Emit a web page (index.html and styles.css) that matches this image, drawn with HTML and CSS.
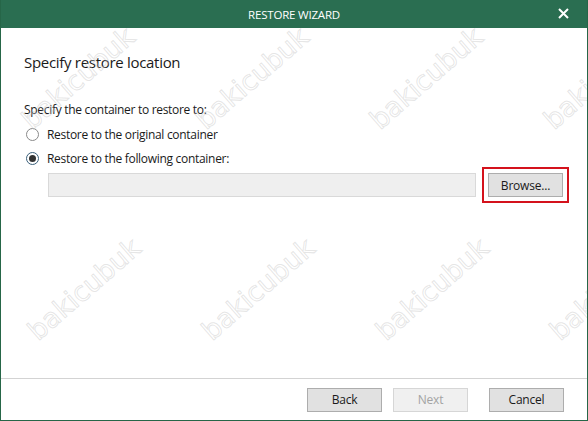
FILE: index.html
```html
<!DOCTYPE html>
<html lang="en">
<head>
    <meta charset="UTF-8">
    <meta name="viewport" content="width=device-width, initial-scale=1.0">
    <title>Restore Wizard</title>
    <link rel="stylesheet" href="styles.css">
</head>
<body>
    <div class="window">
        <div class="titlebar">
            <span class="title">RESTORE WIZARD</span>
            <svg class="close" width="11" height="11" viewBox="0 0 11 11">
                <path d="M1 1 L10 10 M10 1 L1 10" stroke="#fff" stroke-width="2" fill="none"/>
            </svg>
        </div>

        <div class="content">
            <h1>Specify restore location</h1>
            <p class="label">Specify the container to restore to:</p>

            <label class="radio">
                <span class="dot"></span>
                Restore to the original container
            </label>
            <label class="radio checked">
                <span class="dot"></span>
                Restore to the following container:
            </label>

            <div class="path-row">
                <div class="path-field"></div>
                <div class="highlight">
                    <button class="btn">Browse...</button>
                </div>
            </div>
        </div>

        <div class="footer">
            <button class="btn">Back</button>
            <button class="btn disabled">Next</button>
            <button class="btn cancel">Cancel</button>
        </div>

        <div class="watermarks">
            <span class="wm" style="left:77px; top:78px">bakicubuk</span>
            <span class="wm" style="left:251px; top:78px">bakicubuk</span>
            <span class="wm" style="left:425px; top:78px">bakicubuk</span>
            <span class="wm" style="left:599px; top:78px">bakicubuk</span>
            <span class="wm" style="left:83px; top:289px">bakicubuk</span>
            <span class="wm" style="left:257px; top:289px">bakicubuk</span>
            <span class="wm" style="left:431px; top:289px">bakicubuk</span>
            <span class="wm" style="left:605px; top:289px">bakicubuk</span>
        </div>
    </div>
</body>
</html>
```

FILE: styles.css
```css
body {
    margin: 0;
    font-family: "Open Sans", "Noto Sans", sans-serif;
    font-size: 12px;
    color: #1a1a1a;
}
.window {
    position: relative;
    width: 588px;
    height: 421px;
    box-sizing: border-box;
    border: 1px solid #266648;
    border-top: none;
    display: flex;
    flex-direction: column;
    overflow: hidden;
    background: #fff;
}
.titlebar {
    height: 28px;
    margin: 0 -1px;
    background: #2a6e51;
    color: #fff;
    display: flex;
    align-items: center;
    justify-content: center;
    position: relative;
}
.title {
    font-size: 11.5px;
    letter-spacing: -0.2px;
}
.close {
    position: absolute;
    right: 19px;
    top: 8px;
}
.content {
    flex: 1;
    padding: 24px 24px 0 23px;
}
h1 {
    font-size: 15px;
    font-weight: normal;
    margin: 0 0 30px;
    line-height: 20px;
    letter-spacing: -0.3px;
}
.label {
    margin: 0 0 4px;
    line-height: 16px;
    letter-spacing: -0.3px;
}
.radio {
    display: flex;
    align-items: center;
    gap: 8px;
    height: 24px;
    letter-spacing: -0.3px;
}
.dot {
    width: 13px;
    height: 13px;
    box-sizing: border-box;
    border: 1px solid #8a8a8a;
    border-radius: 50%;
    margin-left: 2px;
    display: flex;
    align-items: center;
    justify-content: center;
}
.radio.checked .dot {
    border-color: #3a5f7a;
}
.radio.checked .dot::after {
    content: "";
    width: 7px;
    height: 7px;
    border-radius: 50%;
    background: #333;
}
.path-row {
    display: flex;
    align-items: center;
    gap: 6px;
    margin: -3px 0 0 24px;
}
.path-field {
    flex: 1;
    height: 24px;
    box-sizing: border-box;
    background: #efefef;
    border: 1px solid #d9d9d9;
}
.highlight {
    border: 2px solid #d4121c;
    padding: 4px 4px;
    margin-right: -6px;
}
.btn {
    width: 75px;
    height: 24px;
    font-family: inherit;
    font-size: 12px;
    color: #1a1a1a;
    background: #e1e1e1;
    border: 1px solid #adadad;
    padding: 0;
    letter-spacing: -0.2px;
}
.btn.disabled {
    background: #f0f0f0;
    border-color: #d6d6d6;
    color: #a3a3a3;
}
.footer {
    height: 41px;
    border-top: 1px solid #d3d3d3;
    display: flex;
    align-items: center;
    justify-content: flex-end;
    gap: 11px;
    padding-right: 23px;
}
.btn.cancel {
    margin-left: 10px;
}
.watermarks {
    position: absolute;
    inset: 0;
    pointer-events: none;
}
.wm {
    position: absolute;
    transform: translate(-50%, -50%) rotate(-41deg);
    font-family: "DejaVu Sans", sans-serif;
    font-size: 27px;
    color: rgba(255, 255, 255, 0.2);
    -webkit-text-stroke: 1px rgba(175, 175, 175, 0.32);
    white-space: nowrap;
}
```
